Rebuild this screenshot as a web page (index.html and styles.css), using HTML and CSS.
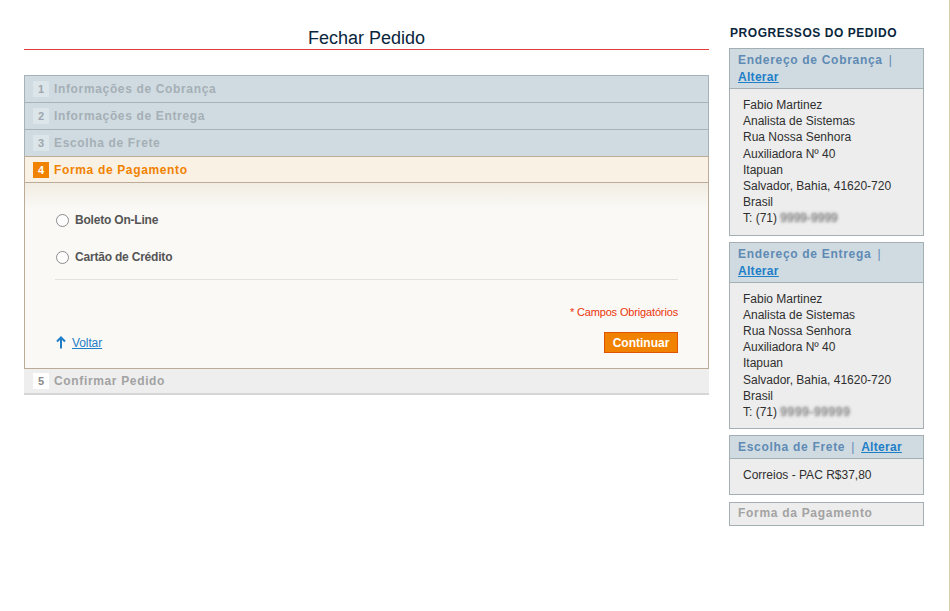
FILE: index.html
```html
<!DOCTYPE html>
<html lang="pt-BR">
<head>
<meta charset="utf-8">
<title>Fechar Pedido</title>
<link rel="stylesheet" href="styles.css">
</head>
<body>
<div class="page">
  <main class="main">
    <h1 class="page-title">Fechar Pedido</h1>
    <div class="accordion">
      <div class="step">
        <div class="step-head"><span class="num">1</span>Informações de Cobrança</div>
      </div>
      <div class="step">
        <div class="step-head"><span class="num">2</span>Informações de Entrega</div>
      </div>
      <div class="step">
        <div class="step-head"><span class="num">3</span>Escolha de Frete</div>
      </div>
      <div class="step step-active">
        <div class="step-head"><span class="num">4</span>Forma de Pagamento</div>
        <div class="step-body">
          <label class="radio-row"><span class="radio"></span>Boleto On-Line</label>
          <label class="radio-row radio-row-2"><span class="radio"></span>Cartão de Crédito</label>
          <div class="divider"></div>
          <p class="required">* Campos Obrigatórios</p>
          <div class="actions">
            <a class="back" href="#"><svg class="up" width="10" height="13" viewBox="0 0 10 13"><path d="M5 12.5V1.5M1 5.5L5 1.5L9 5.5" fill="none" stroke="#1e7ec8" stroke-width="2"/></svg><span>Voltar</span></a>
            <button class="btn">Continuar</button>
          </div>
        </div>
      </div>
      <div class="step step-last">
        <div class="step-head"><span class="num">5</span>Confirmar Pedido</div>
      </div>
    </div>
  </main>
  <aside class="sidebar">
    <h2 class="side-title">PROGRESSOS DO PEDIDO</h2>
    <div class="box">
      <div class="box-head">Endereço de Cobrança <span class="sep">|</span> <a href="#">Alterar</a></div>
      <div class="box-body">
        Fabio Martinez<br>Analista de Sistemas<br>Rua Nossa Senhora<br>Auxiliadora Nº 40<br>Itapuan<br>Salvador, Bahia, 41620-720<br>Brasil<br>T: (71) <span class="blur">9999-9999</span>
      </div>
    </div>
    <div class="box">
      <div class="box-head">Endereço de Entrega <span class="sep">|</span> <a href="#">Alterar</a></div>
      <div class="box-body">
        Fabio Martinez<br>Analista de Sistemas<br>Rua Nossa Senhora<br>Auxiliadora Nº 40<br>Itapuan<br>Salvador, Bahia, 41620-720<br>Brasil<br>T: (71) <span class="blur blur-wide">9999-99999</span>
      </div>
    </div>
    <div class="box box-frete">
      <div class="box-head">Escolha de Frete <span class="sep">|</span> <a href="#">Alterar</a></div>
      <div class="box-body">Correios - PAC R$37,80</div>
    </div>
    <div class="box box-off">
      <div class="box-head">Forma da Pagamento</div>
    </div>
  </aside>
</div>
</body>
</html>
```
FILE: styles.css
```css
* { box-sizing: border-box; }
html, body { margin: 0; padding: 0; background: #fff; }
body {
  font-family: "Liberation Sans", Arial, Helvetica, sans-serif;
  font-size: 12px;
  color: #2f2f2f;
}
.page {
  display: flex;
  width: 950px;
  min-height: 611px;
  padding-left: 24px;
  border-right: 1px solid #d8d0ab;
}
.main { width: 685px; padding-top: 28px; }
.page-title {
  margin: 0;
  font-size: 18px;
  font-weight: normal;
  line-height: 21px;
  color: #0a263c;
  text-align: center;
  border-bottom: 1px solid #e43c3c;
}
.accordion { margin-top: 25px; }
.step {
  border: 1px solid #a7b2b8;
  border-bottom: 0;
  background: #d0dbe1;
}
.step-head {
  height: 26px;
  display: flex;
  align-items: center;
  padding-left: 8px;
  font-weight: bold;
  font-size: 12px;
  letter-spacing: 0.65px;
  color: #a5afb6;
}
.num {
  width: 16px;
  height: 16px;
  margin-right: 5px;
  display: flex;
  align-items: center;
  justify-content: center;
  background: #dbe5ea;
  color: #9ea8ae;
  font-size: 11px;
  letter-spacing: 0;
}
.step-active {
  border-color: #bcab96;
  border-bottom: 1px solid #bcab96;
  background: #faf9f6;
}
.step-active .step-head {
  height: 26px;
  background: #f9f1e3;
  border-bottom: 1px solid #bcab96;
  color: #f18200;
}
.step-active .num { background: #f18200; color: #fff; }
.step-body {
  height: 185px;
  padding: 29px 30px 0;
  background: linear-gradient(#f2ede3, #faf9f6 26px);
}
.radio-row {
  display: flex;
  align-items: center;
  height: 16px;
  padding-left: 1px;
  font-weight: bold;
  letter-spacing: -0.2px;
  color: #555;
}
.radio-row-2 { margin-top: 21px; }
.radio {
  width: 13px;
  height: 13px;
  margin-right: 6px;
  border: 1px solid #8c8c8c;
  border-radius: 50%;
  background: #fdfdfd;
}
.divider { margin-top: 14px; height: 1px; background: #e4e1da; }
.required {
  margin: 25px 0 0;
  line-height: 14px;
  font-size: 11px;
  letter-spacing: -0.15px;
  color: #eb340a;
  text-align: right;
}
.actions {
  margin-top: 13px;
  display: flex;
  justify-content: space-between;
  align-items: center;
}
.back {
  display: flex;
  align-items: center;
  gap: 6px;
  padding-left: 1px;
  color: #1e7ec8;
  font-size: 12px;
  letter-spacing: -0.1px;
}
.back span { text-decoration: underline; }
.up { display: block; }
.btn {
  width: 74px;
  height: 21px;
  padding: 0;
  border: 1px solid #de5400;
  background: #f18200;
  color: #fff;
  font-family: "Liberation Sans", Arial, sans-serif;
  font-weight: bold;
  font-size: 12px;
}
.step-last {
  border: 0;
  border-bottom: 2px solid #d6d6d6;
  background: #eeeeee;
}
.step-last .step-head { height: 24px; padding-left: 9px; color: #a2a2a2; }
.step-last .num { background: #fff; color: #8a8a8a; }

.sidebar { width: 195px; margin-left: 20px; padding-top: 26px; }
.side-title {
  margin: 0 0 7px 1px;
  font-size: 12px;
  line-height: 15px;
  letter-spacing: 0.55px;
  color: #0a263c;
}
.box {
  border: 1px solid #a4afb4;
  background: #ededed;
  margin-bottom: 6px;
}
.box-head {
  padding: 3px 8px 2px;
  line-height: 17px;
  background: #d0dbe1;
  border-bottom: 1px solid #a4afb4;
  font-weight: bold;
  letter-spacing: 0.7px;
  color: #5e8ab4;
}
.box-head .sep { font-weight: normal; margin: 0 2px; }
.box-head a { color: #1e7ec8; letter-spacing: 0.3px; }
.box-body {
  padding: 8px 13px 8px;
  line-height: 16.2px;
  color: #2f2f2f;
}
.blur {
  color: transparent;
  text-shadow: 0 0 3px rgba(70, 70, 70, 0.9);
}
.blur-wide { letter-spacing: 0.6px; }
.box-frete .box-body { padding: 8px 13px 11px; }
.box-frete { margin-bottom: 7px; }
.box-off .box-head {
  background: #ededed;
  border-bottom: 0;
  color: #a3a3a3;
  padding: 2px 8px 3px;
}
```
